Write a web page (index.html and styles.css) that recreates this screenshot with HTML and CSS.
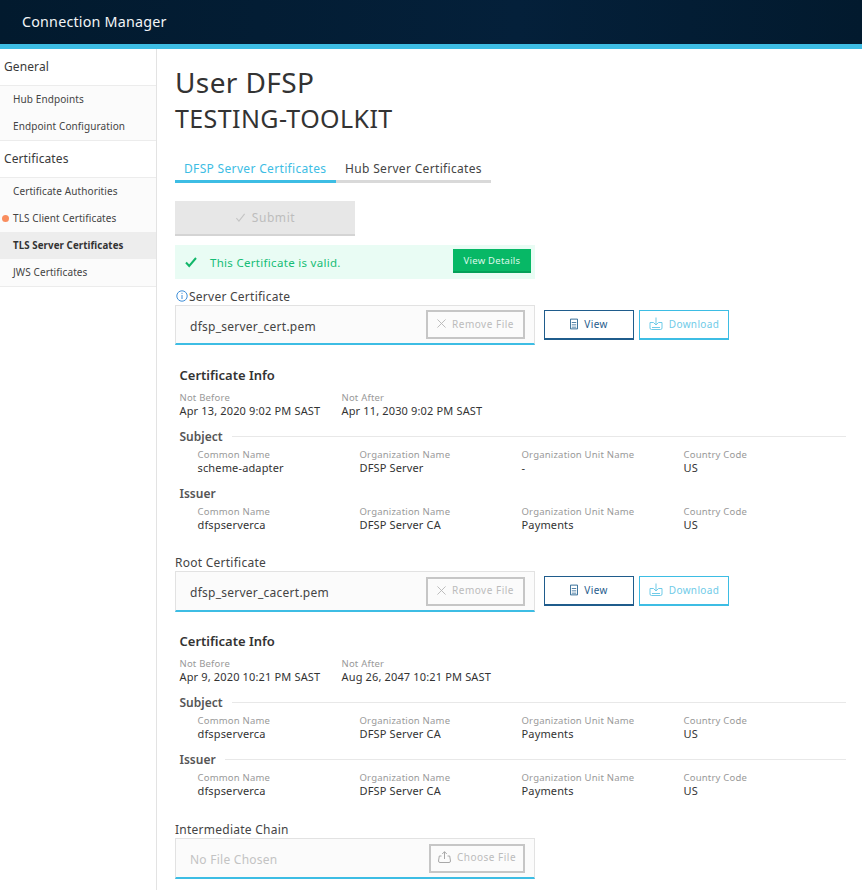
FILE: index.html
```html
<!DOCTYPE html>
<html lang="en">
<head>
<meta charset="utf-8">
<title>Connection Manager</title>
<link rel="stylesheet" href="styles.css">
</head>
<body>
<header class="topbar"><span class="brand">Connection Manager</span></header>
<div class="layout">
  <nav class="sidebar">
    <div class="nav-title">General</div>
    <ul class="nav-list">
      <li class="nav-item">Hub Endpoints</li>
      <li class="nav-item">Endpoint Configuration</li>
    </ul>
    <div class="nav-title">Certificates</div>
    <ul class="nav-list">
      <li class="nav-item">Certificate Authorities</li>
      <li class="nav-item nav-dot">TLS Client Certificates</li>
      <li class="nav-item nav-active">TLS Server Certificates</li>
      <li class="nav-item">JWS Certificates</li>
    </ul>
  </nav>
  <main class="main">
    <h1 class="title">User DFSP</h1>
    <h2 class="subtitle">TESTING-TOOLKIT</h2>
    <div class="tabs">
      <div class="tab tab-on">DFSP Server Certificates</div>
      <div class="tab">Hub Server Certificates</div>
    </div>
    <button class="submit" type="button">
      <svg class="ico-12" viewBox="0 0 12 12"><path d="M1.500 6.800 4.300 10 10.500 2" fill="none" stroke="#c4c4c4" stroke-width="1.200"/></svg>
      <span>Submit</span>
    </button>
    <div class="alert">
      <svg class="alert-check" viewBox="0 0 12 12"><path d="M1 6.500 4.200 10 11 2" fill="none" stroke="#12b76a" stroke-width="2"/></svg>
      <span class="alert-text">This Certificate is valid.</span>
      <button class="details" type="button">View Details</button>
    </div>

    <div class="field-label field-first">
      <svg class="ico-info" viewBox="0 0 12 12"><circle cx="6" cy="6" r="5.200" fill="none" stroke="#3f8fd8"/><path d="M6 5v4M6 2.800v1.100" stroke="#3f8fd8"/></svg>
      <span>Server Certificate</span>
    </div>
    <div class="file-row">
      <div class="file-box file-box-short">
        <span class="file-name">dfsp_server_cert.pem</span>
        <button class="file-btn file-btn-remove" type="button">
          <svg class="ico-10" viewBox="0 0 10 10"><path d="M.5.5l9 9M9.500.5l-9 9" stroke="#b5b5b5"/></svg>
          <span>Remove File</span>
        </button>
      </div>
      <button class="act act-view" type="button">
        <svg class="ico-doc" viewBox="0 0 9 12"><path d="M.5.5h8v11h-8z" fill="none" stroke="#1f5c8c"/><path d="M2 4h5v1H2zM2 6.500h5v1H2zM2 9h5v1H2z" fill="#1f5c8c"/></svg>
        <span>View</span>
      </button>
      <button class="act act-dl" type="button">
        <svg class="ico-dl" viewBox="0 0 14 13"><path d="M4.500 5.500H1v5.500a1.500 1.500 0 0 0 1.500 1.500h9A1.500 1.500 0 0 0 13 11V5.500H9.500M7 .5V8M4.500 5.500 7 8l2.500-2.500M3 10.500h8" fill="none" stroke="#6fcbe8"/></svg>
        <span>Download</span>
      </button>
    </div>
    <section class="info">
      <h3 class="info-title">Certificate Info</h3>
      <div class="dates">
        <div class="date"><div class="k">Not Before</div><div class="v">Apr 13, 2020 9:02 PM SAST</div></div>
        <div class="date"><div class="k">Not After</div><div class="v">Apr 11, 2030 9:02 PM SAST</div></div>
      </div>
      <div class="dn-head"><span>Subject</span><i class="dn-rule"></i></div>
      <div class="dn-grid">
        <div><div class="k">Common Name</div><div class="v">scheme-adapter</div></div>
        <div><div class="k">Organization Name</div><div class="v">DFSP Server</div></div>
        <div><div class="k">Organization Unit Name</div><div class="v">-</div></div>
        <div><div class="k">Country Code</div><div class="v">US</div></div>
      </div>
      <div class="dn-head"><span>Issuer</span></div>
      <div class="dn-grid">
        <div><div class="k">Common Name</div><div class="v">dfspserverca</div></div>
        <div><div class="k">Organization Name</div><div class="v">DFSP Server CA</div></div>
        <div><div class="k">Organization Unit Name</div><div class="v">Payments</div></div>
        <div><div class="k">Country Code</div><div class="v">US</div></div>
      </div>
    </section>

    <div class="field-label field-next"><span>Root Certificate</span></div>
    <div class="file-row">
      <div class="file-box">
        <span class="file-name">dfsp_server_cacert.pem</span>
        <button class="file-btn file-btn-remove" type="button">
          <svg class="ico-10" viewBox="0 0 10 10"><path d="M.5.5l9 9M9.500.5l-9 9" stroke="#b5b5b5"/></svg>
          <span>Remove File</span>
        </button>
      </div>
      <button class="act act-view" type="button">
        <svg class="ico-doc" viewBox="0 0 9 12"><path d="M.5.5h8v11h-8z" fill="none" stroke="#1f5c8c"/><path d="M2 4h5v1H2zM2 6.500h5v1H2zM2 9h5v1H2z" fill="#1f5c8c"/></svg>
        <span>View</span>
      </button>
      <button class="act act-dl" type="button">
        <svg class="ico-dl" viewBox="0 0 14 13"><path d="M4.500 5.500H1v5.500a1.500 1.500 0 0 0 1.500 1.500h9A1.500 1.500 0 0 0 13 11V5.500H9.500M7 .5V8M4.500 5.500 7 8l2.500-2.500M3 10.500h8" fill="none" stroke="#6fcbe8"/></svg>
        <span>Download</span>
      </button>
    </div>
    <section class="info">
      <h3 class="info-title">Certificate Info</h3>
      <div class="dates dates-tall">
        <div class="date"><div class="k">Not Before</div><div class="v">Apr 9, 2020 10:21 PM SAST</div></div>
        <div class="date"><div class="k">Not After</div><div class="v">Aug 26, 2047 10:21 PM SAST</div></div>
      </div>
      <div class="dn-head"><span>Subject</span><i class="dn-rule"></i></div>
      <div class="dn-grid">
        <div><div class="k">Common Name</div><div class="v">dfspserverca</div></div>
        <div><div class="k">Organization Name</div><div class="v">DFSP Server CA</div></div>
        <div><div class="k">Organization Unit Name</div><div class="v">Payments</div></div>
        <div><div class="k">Country Code</div><div class="v">US</div></div>
      </div>
      <div class="dn-head"><span>Issuer</span><i class="dn-rule"></i></div>
      <div class="dn-grid">
        <div><div class="k">Common Name</div><div class="v">dfspserverca</div></div>
        <div><div class="k">Organization Name</div><div class="v">DFSP Server CA</div></div>
        <div><div class="k">Organization Unit Name</div><div class="v">Payments</div></div>
        <div><div class="k">Country Code</div><div class="v">US</div></div>
      </div>
    </section>

    <div class="field-label field-last"><span>Intermediate Chain</span></div>
    <div class="file-row">
      <div class="file-box">
        <span class="file-name file-empty">No File Chosen</span>
        <button class="file-btn file-btn-choose" type="button">
          <svg class="ico-up" viewBox="0 0 13 12"><path d="M3.500 5H1.300L.5 10q0 1.500 1.500 1.500h9q1.500 0 1.500-1.500l-.8-5H9.500M6.500 8V.7M4.200 3 6.500.7 8.800 3" fill="none" stroke="#a8a8a8"/></svg>
          <span>Choose File</span>
        </button>
      </div>
    </div>
  </main>
</div>
</body>
</html>
```
FILE: styles.css
```css
* { box-sizing: border-box; }
html, body { margin: 0; padding: 0; height: 890px; overflow: hidden; }
body { font-family: "Noto Sans", "Open Sans", sans-serif; color: #333; background: #fff; }
button { font-family: inherit; padding: 0; cursor: default; }
svg { display: block; flex: none; }

.topbar {
  height: 49px;
  background: linear-gradient(90deg, #021a2e, #04203a 60%, #021a2e);
  border-bottom: 5px solid #3dbde4;
  display: flex;
  align-items: center;
  padding-left: 22px;
}
.brand { color: #f2f5f7; font-size: 14.300px; letter-spacing: .2px; margin-top: -1px; }

.layout { display: flex; height: 841px; }
.sidebar { width: 157px; flex: none; border-right: 1px solid #e3e3e3; background: #fff; }
.nav-title { height: 36px; line-height: 36px; padding-left: 4px; font-size: 12px; color: #3a3a3a; letter-spacing: .1px; }
.nav-list { list-style: none; margin: 0; padding: 0; border-top: 1px solid #ececec; border-bottom: 1px solid #ececec; background: #fbfbfb; }
.nav-item { height: 27px; line-height: 27px; padding-left: 13px; font-size: 10px; color: #444; letter-spacing: .1px; position: relative; white-space: nowrap; }
.nav-active { background: #ededed; font-weight: 700; color: #333; font-size: 9.700px; }
.nav-dot::before { content: ""; position: absolute; left: 2px; top: 10px; width: 7px; height: 7px; border-radius: 50%; background: #f98d5e; }

.main { flex: 1; padding-left: 18px; min-width: 0; }
.title { margin: 15px 0 0; font-size: 28px; font-weight: 400; line-height: 37px; color: #333; letter-spacing: .4px; }
.subtitle { margin: -1px 0 0; font-size: 25px; font-weight: 400; line-height: 37px; color: #333; letter-spacing: .4px; }
.tabs { display: flex; margin-top: 21px; }
.tab { height: 25px; border-bottom: 3px solid #d9d9d9; font-size: 12px; line-height: 22px; padding: 0 9px; width: 155px; letter-spacing: .33px; color: #444; white-space: nowrap; }
.tab-on { width: 161px; color: #3dbde4; border-bottom-color: #3dbde4; }

.submit { display: flex; align-items: center; justify-content: center; gap: 6px; width: 180px; height: 35px; margin-top: 18px; background: #e7e7e7; border: 0; border-bottom: 2px solid #d4d4d4; color: #bdbdbd; font-size: 12px; letter-spacing: .55px; }
.ico-12 { width: 11px; height: 11px; }

.alert { display: flex; align-items: center; width: 360px; height: 34px; margin-top: 9px; background: #e9fcf4; padding: 0 4px 0 10px; }
.alert-check { width: 12px; height: 12px; }
.alert-text { flex: 1; margin-left: 13px; font-size: 11.500px; color: #16bd76; letter-spacing: .3px; }
.details { width: 78px; height: 24px; padding-top: 1px; background: #07b866; border: 0; border-bottom: 2px solid #04a058; color: #dff8ec; font-size: 9.500px; letter-spacing: .25px; margin-top: -3px; }

.field-label { display: flex; align-items: center; gap: 1px; height: 16px; font-size: 12px; letter-spacing: .25px; color: #444; }
.field-first { margin-top: 9px; }
.field-next { margin-top: 24px; height: 15px; }
.field-last { margin-top: 25px; height: 15px; }
.ico-info { width: 12px; height: 12px; margin-left: 1px; }

.file-row { display: flex; align-items: flex-start; height: 41px; margin-top: 1px; }
.file-box { width: 360px; height: 41px; display: flex; align-items: center; justify-content: space-between; padding: 0 9px 0 14px; background: #fbfbfb; border: 1px solid #e2e2e2; border-bottom: 2px solid #3dbde4; }
.file-box-short { height: 40px; }
.file-name { font-size: 12px; color: #444; letter-spacing: .25px; margin-top: 3px; }
.file-empty { color: #c3c3c3; }
.file-btn { display: flex; align-items: center; justify-content: center; gap: 6px; height: 29px; padding-bottom: 2px; background: #fbfbfb; border: 2px solid #c6c6c6; color: #bbb; font-size: 10px; letter-spacing: .5px; }
.file-btn-remove { width: 99px; }
.file-btn-choose { width: 96px; }
.ico-10 { width: 9px; height: 9px; }
.ico-up { width: 13px; height: 12px; }

.act { display: flex; align-items: center; justify-content: center; gap: 6px; width: 90px; height: 30px; padding-bottom: 2px; margin-top: 5px; background: #fff; border: 1px solid; border-bottom-width: 2px; font-size: 10px; letter-spacing: .35px; }
.act-view { margin-left: 9px; border-color: #1f5c8c; color: #1f5c8c; }
.act-dl { margin-left: 5px; border-color: #3dbde4; color: #6fcbe8; }
.ico-doc { width: 8px; height: 12px; }
.ico-dl { width: 14px; height: 13px; }

.info { padding-left: 4.500px; width: 671px; }
.info-title { margin: 20px 0 0; font-size: 13px; line-height: 18px; font-weight: 600; color: #333; }
.k { font-size: 9.500px; line-height: 13px; color: #999; letter-spacing: .2px; white-space: nowrap; }
.v { font-size: 11px; line-height: 14px; color: #333; letter-spacing: .15px; white-space: nowrap; }
.dates { display: flex; margin-top: 7px; }
.dates-tall { margin-bottom: 1px; }
.date { width: 162px; }
.dn-head { display: flex; align-items: center; gap: 9px; height: 16px; margin-top: 10px; font-size: 12px; font-weight: 600; color: #555; }
.dn-rule { flex: 1; height: 1px; background: #e8e8e8; }
.dn-grid { display: grid; grid-template-columns: repeat(4, 162px); padding-left: 18px; margin-top: 4px; }
.dn-grid .v { line-height: 13px; }
.dn-grid + .dn-head { margin-top: 11px; }
```
